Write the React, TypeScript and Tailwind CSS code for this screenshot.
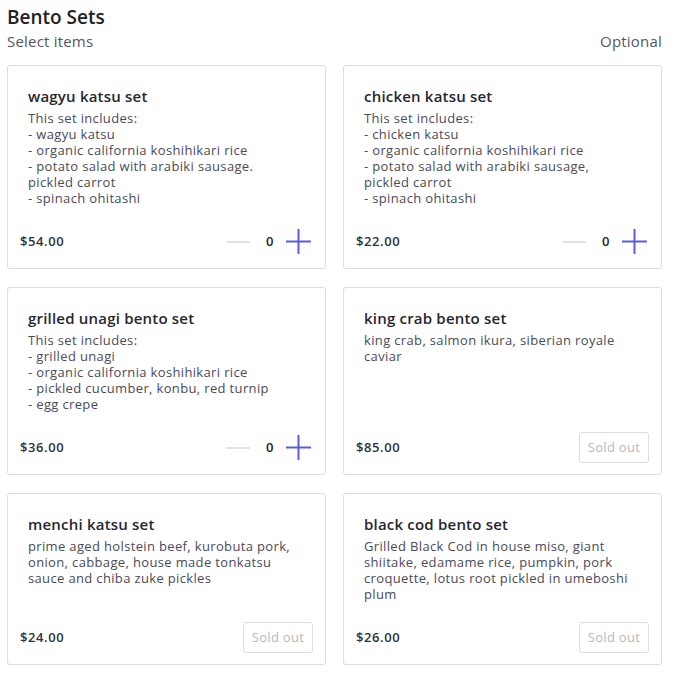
import React from "react";

type Item = {
  name: string;
  desc: string[];
  price: string;
  soldOut?: boolean;
};

const items: Item[] = [
  {
    name: "wagyu katsu set",
    desc: [
      "This set includes:",
      "- wagyu katsu",
      "- organic california koshihikari rice",
      "- potato salad with arabiki sausage.",
      "pickled carrot",
      "- spinach ohitashi",
    ],
    price: "$54.00",
  },
  {
    name: "chicken katsu set",
    desc: [
      "This set includes:",
      "- chicken katsu",
      "- organic california koshihikari rice",
      "- potato salad with arabiki sausage,",
      "pickled carrot",
      "- spinach ohitashi",
    ],
    price: "$22.00",
  },
  {
    name: "grilled unagi bento set",
    desc: [
      "This set includes:",
      "- grilled unagi",
      "- organic california koshihikari rice",
      "- pickled cucumber, konbu, red turnip",
      "- egg crepe",
    ],
    price: "$36.00",
  },
  {
    name: "king crab bento set",
    desc: ["king crab, salmon ikura, siberian royale", "caviar"],
    price: "$85.00",
    soldOut: true,
  },
  {
    name: "menchi katsu set",
    desc: [
      "prime aged holstein beef, kurobuta pork,",
      "onion, cabbage, house made tonkatsu",
      "sauce and chiba zuke pickles",
    ],
    price: "$24.00",
    soldOut: true,
  },
  {
    name: "black cod bento set",
    desc: [
      "Grilled Black Cod in house miso, giant",
      "shiitake, edamame rice, pumpkin, pork",
      "croquette, lotus root pickled in umeboshi",
      "plum",
    ],
    price: "$26.00",
    soldOut: true,
  },
];

function Card({ item }: { item: Item }) {
  return (
    <div className="flex flex-col justify-between rounded-[3px] border border-[#dddddd] bg-white">
      <div className="px-[20px] pt-[20px]">
        <div className="text-[15px] leading-[20px] font-semibold tracking-[0.2px] text-[#26262e]">{item.name}</div>
        <div className="mt-[4px] text-[13px] leading-[16px] tracking-[0.35px] text-[#4a4a58]">
          {item.desc.map((d, i) => (
            <div key={i} className="h-[16px] whitespace-nowrap">{d}</div>
          ))}
        </div>
      </div>
      <div className="mt-[20px] mb-[11px] flex h-[31px] items-center justify-between pl-[12px] pr-[12px]">
        <span className="text-[13px] font-semibold tracking-[0.6px] text-[#2f3140]">{item.price}</span>
        {item.soldOut ? (
          <span className="flex h-[31px] w-[70px] items-center justify-center rounded-[3px] border border-[#dddddd] text-[13px] tracking-[0.3px] text-[#b8b8b8]">
            Sold out
          </span>
        ) : (
          <div className="flex items-center">
            <svg width="24" height="24" viewBox="0 0 24 24" className="mr-[16px]">
              <line x1="0" y1="12" x2="24" y2="12" stroke="#d8d8d8" strokeWidth="1.5" />
            </svg>
            <span className="w-[10px] text-[13px] font-semibold text-[#222]">0</span>
            <svg width="25" height="25" viewBox="0 0 25 25" className="ml-[10px] mr-[2px]">
              <line x1="0" y1="12.5" x2="25" y2="12.5" stroke="#5a5ae0" strokeWidth="2" />
              <line x1="12.5" y1="0" x2="12.5" y2="25" stroke="#5a5ae0" strokeWidth="2" />
            </svg>
          </div>
        )}
      </div>
    </div>
  );
}

export default function App() {
  return (
    <div
      className="bg-white pl-[7px] pr-[13px] pt-[5px] pb-[10px]"
      style={{ fontFamily: "'Open Sans', 'Noto Sans', sans-serif" }}
    >
      <h1 className="text-[19px] leading-[24px] font-semibold text-[#222]">Bento Sets</h1>
      <div className="mt-[2px] flex justify-between text-[15px] leading-[20px] tracking-[0.2px] text-[#555560]">
        <span>Select items</span>
        <span>Optional</span>
      </div>
      <div className="mt-[14px] grid grid-cols-2 gap-x-[17px] gap-y-[18px]">
        {items.map((it) => (
          <Card key={it.name} item={it} />
        ))}
      </div>
    </div>
  );
}
